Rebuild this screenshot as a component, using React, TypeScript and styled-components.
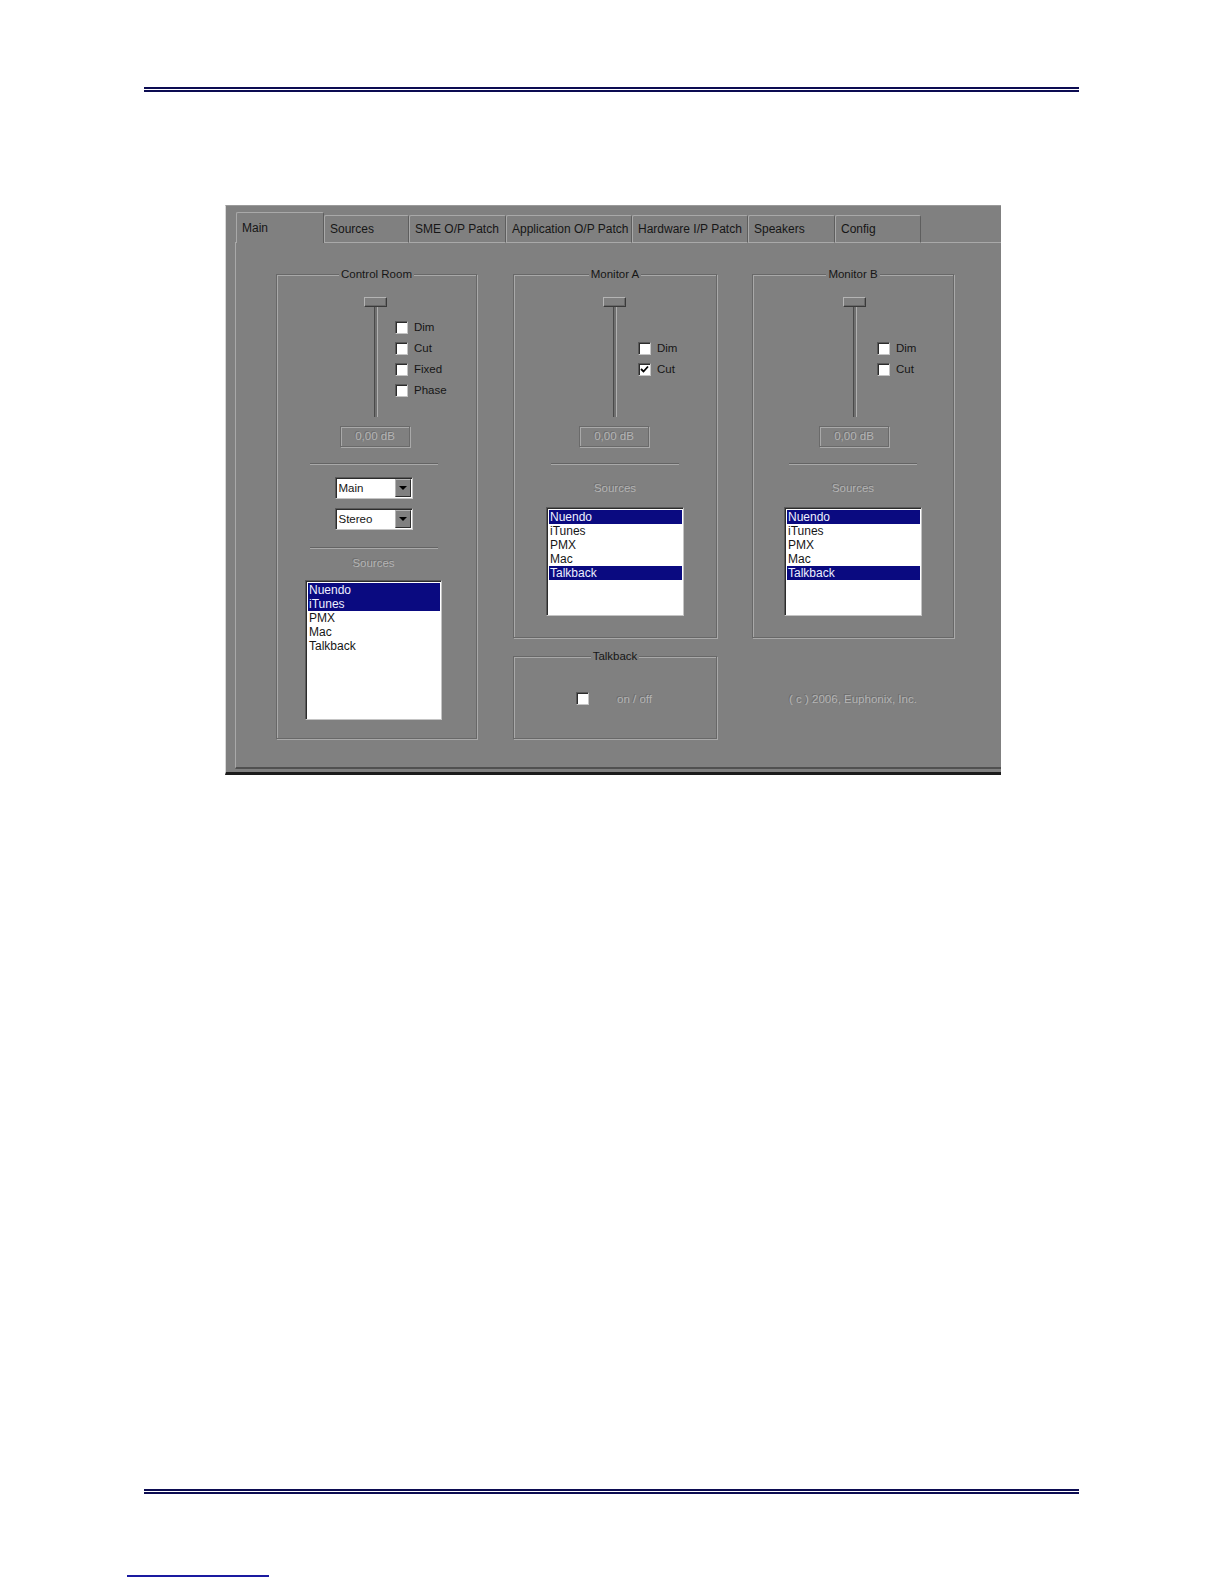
import React from "react";
import styled, { createGlobalStyle } from "styled-components";

const FACE = "#808080";
const HI = "#a9a9a9";
const LO = "#5e5e5e";
const INK = "#161616";

const GlobalStyle = createGlobalStyle`
  html, body { margin: 0; padding: 0; background: #fff; }
  body { font-family: "Liberation Sans", Arial, sans-serif; }
`;

const Page = styled.div`
  width: 1224px;
  height: 1584px;
  box-sizing: border-box;
  padding-top: 87px;
  display: flex;
  flex-direction: column;
  overflow: hidden;
`;

const DoubleRule = styled.div<{ $top: number }>`
  margin: ${p => p.$top}px 0 0 144px;
  width: 935px;
  height: 1px;
  border-top: 2px solid #0c0c52;
  border-bottom: 2px solid #0c0c52;
`;

const LinkRule = styled.div`
  margin: 81px 0 0 127px;
  width: 142px;
  height: 2px;
  background: #1a1aa0;
`;

/* ---------- the captured window ---------- */

const Window = styled.div`
  margin: 113px 0 0 225px;
  width: 776px;
  height: 570px;
  box-sizing: border-box;
  background: ${FACE};
  border-top: 1px solid #9a9a9a;
  border-left: 1px solid #d8d8d8;
  border-bottom: 3px solid #1c1c1c;
  padding: 6px 0 0 9px;
  overflow: hidden;
  display: flex;
  flex-direction: column;
  font-size: 11px;
  color: ${INK};
`;

const TabRow = styled.div`
  display: flex;
  align-items: flex-end;
  height: 31px;
  margin: 0 0 -1px 1px;
  position: relative;
  z-index: 1;
`;

const Tab = styled.div<{ $w: number; $active?: boolean }>`
  width: ${p => p.$w}px;
  height: ${p => (p.$active ? 31 : 28)}px;
  box-sizing: border-box;
  flex: none;
  background: ${FACE};
  border-top: 1px solid ${HI};
  border-left: 1px solid ${HI};
  border-right: 1px solid ${LO};
  border-bottom: ${p => (p.$active ? "none" : `1px solid ${HI}`)};
  border-radius: 2px 2px 0 0;
  padding: ${p => (p.$active ? "8px 0 0 5px" : "6px 0 0 5px")};
  font-size: 12px;
  line-height: 14px;
  white-space: nowrap;
`;

const Panel = styled.div`
  width: 800px;
  height: 527px;
  box-sizing: border-box;
  flex: none;
  border-top: 1px solid ${HI};
  border-left: 1px solid ${HI};
  border-bottom: 2px solid #505050;
  padding: 31px 0 0 40px;
  display: flex;
  align-items: flex-start;
`;

const Column = styled.div<{ $w: number; $gap: number }>`
  width: ${p => p.$w}px;
  margin-right: ${p => p.$gap}px;
  display: flex;
  flex-direction: column;
  flex: none;
`;

const Group = styled.div<{ $h: number }>`
  height: ${p => p.$h}px;
  box-sizing: border-box;
  border: 1px solid #686868;
  box-shadow: 1px 1px 0 ${HI}, inset 1px 1px 0 ${HI};
  display: flex;
  flex-direction: column;
`;

const GroupTitle = styled.div`
  align-self: center;
  margin-top: -8px;
  padding: 0 2px;
  background: ${FACE};
  font-size: 11.5px;
  line-height: 14px;
  color: ${INK};
`;

/* ---------- fader with its switches ---------- */

const FaderBlock = styled.div<{ $left: number }>`
  margin: 16px 0 0 ${p => p.$left}px;
  display: flex;
  flex-direction: column;
`;

const FaderRow = styled.div`
  display: flex;
  align-items: flex-start;
`;

const Fader = styled.div`
  width: 23px;
  display: flex;
  flex-direction: column;
  align-items: center;
`;

const Thumb = styled.div`
  width: 23px;
  height: 10px;
  box-sizing: border-box;
  background: ${FACE};
  border-top: 1px solid #b4b4b4;
  border-left: 1px solid #b4b4b4;
  border-right: 1px solid #3a3a3a;
  border-bottom: 1px solid #3a3a3a;
  box-shadow: inset -1px -1px 0 #686868;
`;

const Track = styled.div`
  width: 4px;
  height: 110px;
  box-sizing: border-box;
  background: #707070;
  border-left: 1px solid #4a4a4a;
  border-right: 1px solid #b0b0b0;
`;

const Checks = styled.div<{ $left: number; $top: number }>`
  margin: ${p => p.$top}px 0 0 ${p => p.$left}px;
  display: flex;
  flex-direction: column;
  gap: 8px;
`;

const CheckRow = styled.label`
  display: flex;
  align-items: center;
  height: 13px;
  line-height: 13px;
  font-size: 11.5px;
`;

const Box = styled.span`
  width: 13px;
  height: 13px;
  box-sizing: border-box;
  flex: none;
  background: #fff;
  border-top: 1px solid #5a5a5a;
  border-left: 1px solid #5a5a5a;
  border-right: 1px solid #c4c4c4;
  border-bottom: 1px solid #c4c4c4;
  box-shadow: inset 1px 1px 0 #2c2c2c;
  display: flex;
  align-items: center;
  justify-content: center;
`;

const CheckLabel = styled.span<{ $gap?: number; $disabled?: boolean }>`
  margin-left: ${p => p.$gap ?? 6}px;
  font-size: 11.5px;
  color: ${p => (p.$disabled ? "#b4b4b4" : INK)};
  text-shadow: ${p => (p.$disabled ? "-1px -1px 0 #6c6c6c" : "none")};
`;

const DbBox = styled.div`
  margin: 9px 0 0 -24px;
  width: 70px;
  height: 21px;
  box-sizing: border-box;
  border: 1px solid #6a6a6a;
  box-shadow: 1px 1px 0 ${HI}, inset 1px 1px 0 ${HI};
  text-align: center;
  line-height: 19px;
  font-size: 11.5px;
`;

const Dim = styled.span`
  color: #b4b4b4;
  text-shadow: -1px -1px 0 #6c6c6c;
`;

/* ---------- lower part: selectors and source lists ---------- */

const Lower = styled.div<{ $shift?: number }>`
  display: flex;
  flex-direction: column;
  align-items: center;
  padding-right: ${p => p.$shift ?? 0}px;
`;

const Separator = styled.div<{ $top?: number }>`
  margin-top: ${p => p.$top ?? 16}px;
  width: 128px;
  border-top: 1px solid #646464;
  border-bottom: 1px solid ${HI};
`;

const Select = styled.div<{ $top: number }>`
  margin-top: ${p => p.$top}px;
  width: 78px;
  height: 22px;
  box-sizing: border-box;
  background: #fff;
  border-top: 1px solid #5a5a5a;
  border-left: 1px solid #5a5a5a;
  border-right: 1px solid #c4c4c4;
  border-bottom: 1px solid #c4c4c4;
  box-shadow: inset 1px 1px 0 #2c2c2c;
  display: flex;
  align-items: center;
  padding: 1px 1px 1px 3px;
  font-size: 11.5px;
`;

const SelectText = styled.span`
  flex: 1;
  line-height: 13px;
`;

const ArrowButton = styled.span`
  width: 16px;
  height: 18px;
  box-sizing: border-box;
  background: ${FACE};
  border-top: 1px solid #b4b4b4;
  border-left: 1px solid #b4b4b4;
  border-right: 1px solid #2e2e2e;
  border-bottom: 1px solid #2e2e2e;
  display: flex;
  align-items: center;
  justify-content: center;

  &::after {
    content: "";
    border-top: 4px solid #000;
    border-left: 4px solid transparent;
    border-right: 4px solid transparent;
  }
`;

const SourcesLabel = styled.div<{ $top: number }>`
  margin-top: ${p => p.$top}px;
  line-height: 14px;
  font-size: 11.5px;
`;

const ListBox = styled.div<{ $w: number; $h: number; $top: number }>`
  margin-top: ${p => p.$top}px;
  width: ${p => p.$w}px;
  height: ${p => p.$h}px;
  box-sizing: border-box;
  background: #fff;
  border-top: 1px solid #5a5a5a;
  border-left: 1px solid #5a5a5a;
  border-right: 1px solid #c4c4c4;
  border-bottom: 1px solid #c4c4c4;
  box-shadow: inset 1px 1px 0 #2c2c2c;
  padding: 2px 1px 0 2px;
`;

const ListItem = styled.div<{ $sel?: boolean }>`
  height: 14px;
  line-height: 14px;
  padding-left: 1px;
  font-size: 12px;
  background: ${p => (p.$sel ? "#0a0a80" : "transparent")};
  color: ${p => (p.$sel ? "#eef0ff" : INK)};
`;

const TalkRow = styled.div`
  margin: 29px 0 0 62px;
  display: flex;
  align-items: center;
`;

const Copyright = styled.div`
  margin-top: 54px;
  text-align: center;
  line-height: 14px;
  font-size: 11.5px;
`;

/* ---------- data ---------- */

const tabs = [
  { label: "Main", w: 88 },
  { label: "Sources", w: 85 },
  { label: "SME O/P Patch", w: 97 },
  { label: "Application O/P Patch", w: 126 },
  { label: "Hardware I/P Patch", w: 116 },
  { label: "Speakers", w: 87 },
  { label: "Config", w: 86 },
];

const SOURCES = ["Nuendo", "iTunes", "PMX", "Mac", "Talkback"];

const Tick = () => (
  <svg width="9" height="9" viewBox="0 0 9 9">
    <path d="M1 4 L3.5 6.5 L8 1.5" fill="none" stroke="#000" strokeWidth="1.8" />
  </svg>
);

const CheckItem = ({ label, checked }: { label: string; checked?: boolean }) => (
  <CheckRow>
    <Box>{checked && <Tick />}</Box>
    <CheckLabel>{label}</CheckLabel>
  </CheckRow>
);

interface FaderProps {
  left: number;
  checksLeft: number;
  checksTop: number;
  checks: { label: string; checked?: boolean }[];
}

const FaderSection = ({ left, checksLeft, checksTop, checks }: FaderProps) => (
  <FaderBlock $left={left}>
    <FaderRow>
      <Fader>
        <Thumb />
        <Track />
      </Fader>
      <Checks $left={checksLeft} $top={checksTop}>
        {checks.map(c => (
          <CheckItem key={c.label} label={c.label} checked={c.checked} />
        ))}
      </Checks>
    </FaderRow>
    <DbBox>
      <Dim>0,00 dB</Dim>
    </DbBox>
  </FaderBlock>
);

const SourceList = ({
  selected,
  w,
  h,
  top,
}: {
  selected: string[];
  w: number;
  h: number;
  top: number;
}) => (
  <ListBox $w={w} $h={h} $top={top}>
    {SOURCES.map(s => (
      <ListItem key={s} $sel={selected.includes(s)}>
        {s}
      </ListItem>
    ))}
  </ListBox>
);

const App = () => (
  <>
    <GlobalStyle />
    <Page>
      <DoubleRule $top={0} />

      <Window>
        <TabRow>
          {tabs.map((t, i) => (
            <Tab key={t.label} $w={t.w} $active={i === 0}>
              {t.label}
            </Tab>
          ))}
        </TabRow>

        <Panel>
          <Column $w={201} $gap={36}>
            <Group $h={465}>
              <GroupTitle>Control Room</GroupTitle>
              <FaderSection
                left={87}
                checksLeft={8}
                checksTop={24}
                checks={[
                  { label: "Dim" },
                  { label: "Cut" },
                  { label: "Fixed" },
                  { label: "Phase" },
                ]}
              />
              <Lower $shift={6}>
                <Separator />
                <Select $top={12}>
                  <SelectText>Main</SelectText>
                  <ArrowButton />
                </Select>
                <Select $top={9}>
                  <SelectText>Stereo</SelectText>
                  <ArrowButton />
                </Select>
                <Separator $top={17} />
                <SourcesLabel $top={7}>
                  <Dim>Sources</Dim>
                </SourcesLabel>
                <SourceList selected={["Nuendo", "iTunes"]} w={137} h={140} top={10} />
              </Lower>
            </Group>
          </Column>

          <Column $w={204} $gap={35}>
            <Group $h={364}>
              <GroupTitle>Monitor A</GroupTitle>
              <FaderSection
                left={89}
                checksLeft={12}
                checksTop={45}
                checks={[{ label: "Dim" }, { label: "Cut", checked: true }]}
              />
              <Lower>
                <Separator />
                <SourcesLabel $top={16}>
                  <Dim>Sources</Dim>
                </SourcesLabel>
                <SourceList selected={["Nuendo", "Talkback"]} w={138} h={109} top={12} />
              </Lower>
            </Group>
            <Group $h={83} style={{ marginTop: 18 }}>
              <GroupTitle>Talkback</GroupTitle>
              <TalkRow>
                <Box />
                <CheckLabel $gap={28} $disabled>
                  on / off
                </CheckLabel>
              </TalkRow>
            </Group>
          </Column>

          <Column $w={202} $gap={0}>
            <Group $h={364}>
              <GroupTitle>Monitor B</GroupTitle>
              <FaderSection
                left={90}
                checksLeft={11}
                checksTop={45}
                checks={[{ label: "Dim" }, { label: "Cut" }]}
              />
              <Lower>
                <Separator />
                <SourcesLabel $top={16}>
                  <Dim>Sources</Dim>
                </SourcesLabel>
                <SourceList selected={["Nuendo", "Talkback"]} w={138} h={109} top={12} />
              </Lower>
            </Group>
            <Copyright>
              <Dim>( c ) 2006, Euphonix, Inc.</Dim>
            </Copyright>
          </Column>
        </Panel>
      </Window>

      <DoubleRule $top={714} />
      <LinkRule />
    </Page>
  </>
);

export default App;
